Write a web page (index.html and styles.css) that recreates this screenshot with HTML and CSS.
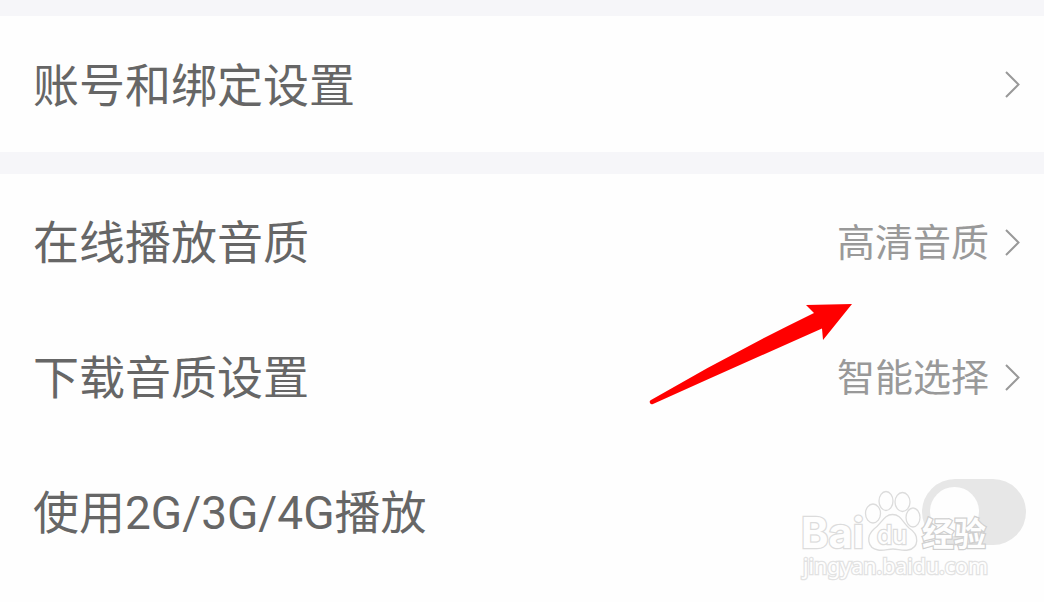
FILE: index.html
```html
<!DOCTYPE html>
<html lang="zh-CN">
<head>
    <meta charset="UTF-8">
    <title>设置</title>
    <link rel="stylesheet" href="styles.css">
</head>
<body>
    <div class="settings">
        <div class="group">
            <div class="row">
                <span class="label">账号和绑定设置</span>
                <svg class="chevron" viewBox="0 0 16 28"><path d="M2 2 L14.500 14.500 L2 27"/></svg>
            </div>
        </div>

        <div class="group">
            <div class="row">
                <span class="label">在线播放音质</span>
                <span class="value">高清音质</span>
                <svg class="chevron" viewBox="0 0 16 28"><path d="M2 2 L14.500 14.500 L2 27"/></svg>
            </div>
            <div class="row">
                <span class="label">下载音质设置</span>
                <span class="value">智能选择</span>
                <svg class="chevron" viewBox="0 0 16 28"><path d="M2 2 L14.500 14.500 L2 27"/></svg>
            </div>
            <div class="row">
                <span class="label">使用2G/3G/4G播放</span>
                <span class="toggle"><span class="knob"></span></span>
            </div>
        </div>
    </div>

    <!-- Pointer arrow -->
    <svg class="arrow" viewBox="0 0 210 110">
        <path d="M1 100 Q80 54 164 13 L156 5 L202 4 L173 40 L172 28.5 Q90 65 3 104 Q1 105 0 103 Q-1 101 1 100 Z"/>
    </svg>

    <!-- Watermark -->
    <svg class="watermark" viewBox="0 0 200 100">
        <text class="brand" x="0" y="73" textLength="63" lengthAdjust="spacingAndGlyphs">Bai</text>
        <g class="paw">
            <ellipse cx="72" cy="38.5" rx="7.5" ry="9.5"/>
            <ellipse cx="85" cy="26" rx="7" ry="9.5"/>
            <ellipse cx="101.5" cy="27" rx="7.5" ry="9.5"/>
            <ellipse cx="112" cy="42.5" rx="7" ry="9.5"/>
            <path d="M91.500 39.500 C100 39.500 102 48 108 53 C119 60 118 73 107 75 C101 76 97 74 92 74 C87 74 83 76 77 75 C66 73 65 61 73 54 C81 48 83 39.500 91.500 39.500 Z"/>
        </g>
        <text class="du" x="76" y="69" textLength="30" lengthAdjust="spacingAndGlyphs">du</text>
        <text class="cn" x="121" y="71" textLength="64" lengthAdjust="spacingAndGlyphs">经验</text>
        <text class="site" x="2" y="98.5" textLength="185" lengthAdjust="spacingAndGlyphs">jingyan.baidu.com</text>
    </svg>
</body>
</html>
```
FILE: styles.css
```css
body {
    margin: 0;
    height: 602px;
    overflow: hidden;
    position: relative;
    background: #fefefe;
    font-family: Roboto, "Noto Sans CJK SC", sans-serif;
}
.settings {
    border-top: 16px solid #f6f6f9;
}
.group + .group {
    border-top: 22px solid #f6f6f9;
}
.row {
    display: flex;
    align-items: center;
    height: 135px;
    padding: 0 18px 0 33px;
}
.group:first-child .row {
    height: 136px;
}
.label {
    flex: 1;
    padding-top: 3px;
    font-size: 46px;
    line-height: 60px;
    color: #666;
}
.value {
    margin-right: 15px;
    padding-top: 2px;
    font-size: 38px;
    line-height: 50px;
    color: #999;
}
.chevron {
    width: 16px;
    height: 28px;
    margin-right: 6px;
    fill: none;
    stroke: #999;
    stroke-width: 2;
}
.toggle {
    display: flex;
    align-items: center;
    box-sizing: border-box;
    width: 104px;
    height: 66px;
    padding-left: 8px;
    border-radius: 33px;
    background: #e7e7e7;
}
.knob {
    width: 49px;
    height: 49px;
    border-radius: 50%;
    background: #fefefe;
}
.arrow {
    position: absolute;
    left: 650px;
    top: 300px;
    width: 210px;
    height: 110px;
    overflow: visible;
    fill: #f00;
}
.watermark {
    position: absolute;
    left: 801px;
    top: 475px;
    width: 200px;
    height: 100px;
    overflow: visible;
    fill: #fefefe;
    stroke: #dcdcdc;
    stroke-width: 1.3;
}
.watermark text {
    paint-order: stroke;
    stroke-width: 2.5;
}
.brand {
    font: bold 42px Inter, sans-serif;
}
.du {
    font: 500 25px Inter, sans-serif;
}
.watermark .cn {
    font: bold 33px "Noto Sans CJK SC", sans-serif;
    stroke: #cfcfcf;
}
.watermark .site {
    font: 21px "Noto Sans", sans-serif;
    stroke: #e2e2e2;
}
```
